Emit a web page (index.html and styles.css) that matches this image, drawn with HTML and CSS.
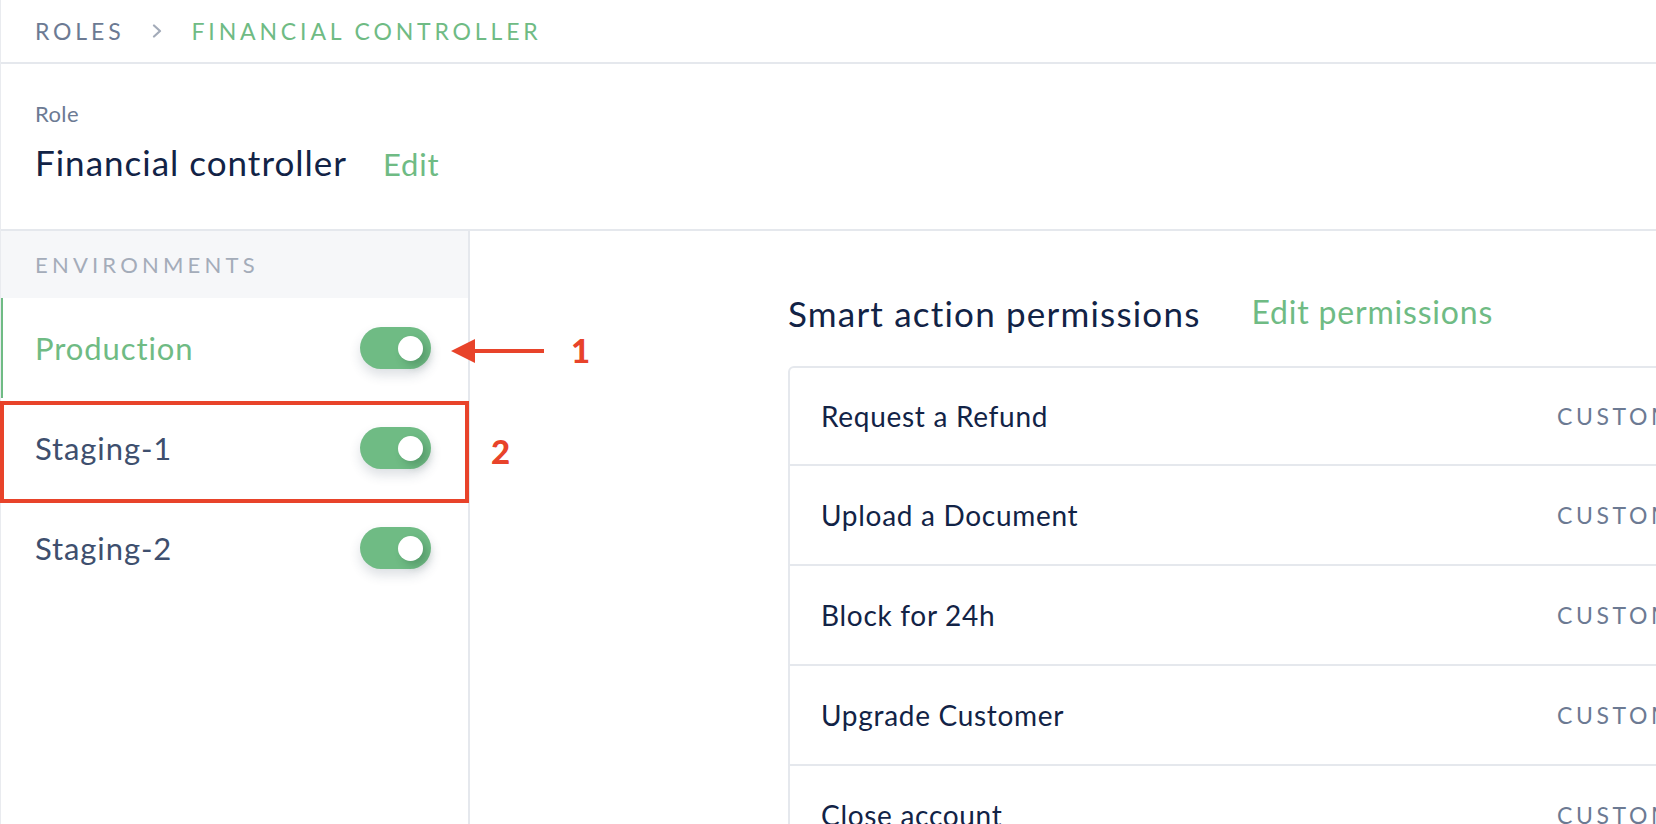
FILE: index.html
```html
<!DOCTYPE html>
<html lang="en">
<head>
<meta charset="utf-8">
<title>Financial controller</title>
<link rel="stylesheet" href="styles.css">
</head>
<body>
<div class="page">
  <nav class="crumbs">
    <span class="crumb">ROLES</span>
    <svg class="chev" width="12" height="14" viewBox="0 0 12 14"><path d="M3 1.5 L9 7 L3 12.5" fill="none" stroke="#a3abb9" stroke-width="2.2" stroke-linecap="round" stroke-linejoin="round"/></svg>
    <span class="crumb crumb-active">FINANCIAL CONTROLLER</span>
  </nav>

  <header class="role-head">
    <div class="role-label">Role</div>
    <div class="role-title-row">
      <h1 class="role-title">Financial controller</h1>
      <a class="link link-edit">Edit</a>
    </div>
  </header>

  <div class="body">
    <aside class="sidebar">
      <div class="env-head">ENVIRONMENTS</div>
      <div class="env-row env-active">
        <span class="env-name">Production</span>
        <span class="toggle"><span class="knob"></span></span>
      </div>
      <div class="env-row">
        <span class="env-name">Staging-1</span>
        <span class="toggle"><span class="knob"></span></span>
      </div>
      <div class="env-row">
        <span class="env-name">Staging-2</span>
        <span class="toggle"><span class="knob"></span></span>
      </div>
    </aside>

    <main class="main">
      <div class="main-head">
        <h2 class="main-title">Smart action permissions</h2>
        <a class="link link-perm">Edit permissions</a>
      </div>
      <div class="card">
        <div class="card-row"><span class="action">Request a Refund</span><span class="scope">CUSTOM</span></div>
        <div class="card-row"><span class="action">Upload a Document</span><span class="scope">CUSTOM</span></div>
        <div class="card-row"><span class="action">Block for 24h</span><span class="scope">CUSTOM</span></div>
        <div class="card-row"><span class="action">Upgrade Customer</span><span class="scope">CUSTOM</span></div>
        <div class="card-row"><span class="action">Close account</span><span class="scope">CUSTOM</span></div>
      </div>
    </main>
  </div>

  <div class="mark-box"></div>
  <svg class="mark-arrow" width="96" height="28" viewBox="0 0 96 28"><path d="M0 14 L24 2 L24 12 L93 12 L93 16 L24 16 L24 26 Z" fill="#e8432a"/></svg>
  <span class="mark-num mark-1">1</span>
  <span class="mark-num mark-2">2</span>
</div>
</body>
</html>
```

FILE: styles.css
```css
* { box-sizing: border-box; }

html, body {
  margin: 0;
  padding: 0;
  background: #ffffff;
}

body {
  width: 1656px;
  height: 824px;
  overflow: hidden;
  font-family: "Lato", "Open Sans", sans-serif;
}

.page {
  position: relative;
  height: 824px;
  border-left: 1px solid #e9ebef;
  display: flex;
  flex-direction: column;
}

/* breadcrumb */
.crumbs {
  height: 64px;
  flex: none;
  display: flex;
  align-items: center;
  padding-left: 34px;
  border-bottom: 2px solid #e5e8ed;
}
.crumb {
  font-size: 23px;
  letter-spacing: 3.85px;
  color: #6c7a93;
}
.crumb-active { color: #6fbb84; }
.chev { margin: 0 28px 0 27px; }

/* role header */
.role-head {
  height: 167px;
  flex: none;
  padding: 38px 0 0 34px;
  border-bottom: 2px solid #e5e8ed;
}
.role-label {
  font-size: 22px;
  line-height: 24px;
  letter-spacing: 0.4px;
  color: #6c7a93;
}
.role-title-row {
  margin-top: 16px;
  display: flex;
  align-items: baseline;
}
.role-title {
  margin: 0;
  font-size: 35px;
  line-height: 40px;
  font-weight: 400;
  letter-spacing: 1px;
  color: #122346;
}
.link {
  color: #6fbb84;
  text-decoration: none;
}
.link-edit {
  margin-left: 36px;
  font-size: 31px;
  letter-spacing: 0.8px;
}

/* body */
.body {
  flex: 1;
  display: flex;
  min-height: 0;
}
.sidebar {
  width: 469px;
  flex: none;
  border-right: 2px solid #e5e8ed;
}
.env-head {
  height: 67px;
  display: flex;
  align-items: center;
  padding-left: 34px;
  background: #f6f7f9;
  font-size: 22px;
  letter-spacing: 4.2px;
  color: #a4acb9;
}
.env-row {
  height: 100px;
  display: flex;
  align-items: center;
  justify-content: space-between;
  padding: 0 37px 0 34px;
}
.env-active {
  border-left: 2px solid #6fbb84;
  padding-left: 32px;
}
.env-name {
  font-size: 31px;
  letter-spacing: 0.9px;
  color: #3e4f6e;
}
.env-active .env-name { color: #6fbb84; }

.toggle {
  width: 71px;
  height: 42px;
  border-radius: 21px;
  background: #6fbb84;
  display: flex;
  align-items: center;
  justify-content: flex-end;
  padding-right: 8px;
  box-shadow: 0 6px 12px rgba(40, 55, 80, 0.16);
}
.knob {
  width: 25px;
  height: 25px;
  border-radius: 50%;
  background: #ffffff;
  box-shadow: 5px 5px 9px rgba(30, 80, 45, 0.28);
}

/* main */
.main {
  flex: 1;
  min-width: 0;
  overflow: hidden;
  padding: 62px 0 0 318px;
}
.main-head {
  display: flex;
  align-items: baseline;
  height: 40px;
}
.main-title {
  margin: 0;
  font-size: 35px;
  line-height: 40px;
  font-weight: 400;
  letter-spacing: 1.2px;
  color: #122346;
}
.link-perm {
  margin-left: 51px;
  font-size: 32px;
  letter-spacing: 0.8px;
  position: relative;
  top: -3px;
}
.card {
  margin-top: 33px;
  width: 1100px;
  border: 2px solid #e5e8ed;
  border-radius: 6px;
}
.card-row {
  height: 100px;
  display: flex;
  align-items: center;
  padding-left: 31px;
  border-bottom: 2px solid #e5e8ed;
}
.card-row:first-child { height: 98px; }
.action {
  width: 736px;
  font-size: 28px;
  letter-spacing: 0.7px;
  color: #122346;
}
.scope {
  font-size: 23px;
  letter-spacing: 3.6px;
  color: #6c7a93;
}

/* annotations (overlay) */
.mark-box {
  position: absolute;
  left: -1px;
  top: 401px;
  width: 469px;
  height: 102px;
  border: 4px solid #e8432a;
}
.mark-arrow {
  position: absolute;
  left: 450px;
  top: 337px;
}
.mark-num {
  position: absolute;
  font-size: 33px;
  font-weight: 900;
  line-height: 40px;
  color: #e8432a;
}
.mark-1 { left: 570px; top: 330px; }
.mark-2 { left: 490px; top: 431px; }
```
